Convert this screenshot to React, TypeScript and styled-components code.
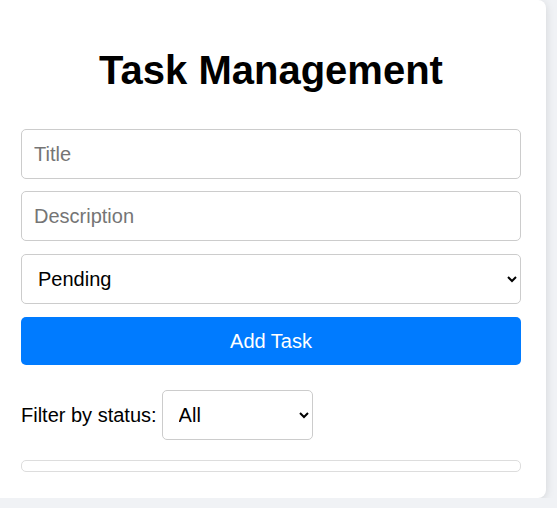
import React, { useState } from "react";
import styled, { createGlobalStyle } from "styled-components";

const GlobalStyle = createGlobalStyle`
  html, body {
    margin: 0;
    padding: 0;
    background: #f0f2f5;
    font-family: "Liberation Sans", Arial, sans-serif;
    overflow: hidden;
  }
  * { box-sizing: border-box; }
`;

const Card = styled.div`
  width: 546px;
  background: #ffffff;
  border-radius: 0 8px 8px 0;
  box-shadow: 0 2px 10px rgba(0, 0, 0, 0.12);
  padding: 20px 25px 26px 21px;
  display: flex;
  flex-direction: column;
`;

const Title = styled.h1`
  margin: 28px 0 36px;
  font-size: 40px;
  font-weight: bold;
  text-align: center;
  color: #000;
`;

const Form = styled.form`
  display: flex;
  flex-direction: column;
  gap: 12px;
`;

const TextInput = styled.input`
  width: 100%;
  height: 50px;
  padding: 0 12px;
  font-family: inherit;
  font-size: 20px;
  border: 1px solid #ccc;
  border-radius: 5px;
  color: #000;
  &::placeholder { color: #757575; }
  &:focus { outline: none; }
`;

const Select = styled.select<{ $width?: string; $offset?: string }>`
  width: ${(p) => p.$width ?? "100%"};
  height: 50px;
  margin-top: ${(p) => p.$offset ?? "0"};
  padding: 0 12px;
  font-family: inherit;
  font-size: 20px;
  border: 1px solid #ccc;
  border-radius: 5px;
  background: #fff;
  color: #000;
`;

const AddButton = styled.button`
  width: 100%;
  height: 48px;
  margin-top: 1px;
  border: none;
  border-radius: 5px;
  background: #007bff;
  color: #fff;
  font-family: inherit;
  font-size: 20px;
  cursor: pointer;
`;

const FilterRow = styled.div`
  display: flex;
  align-items: center;
  gap: 5px;
  margin: 25px 0 20px;
  font-size: 20px;
  color: #000;
`;

const TaskList = styled.ul`
  list-style: none;
  margin: 0;
  padding: 5px;
  border: 1px solid #ddd;
  border-radius: 5px;
  min-height: 12px;
`;

export default function App() {
  const [status, setStatus] = useState("Pending");
  const [filter, setFilter] = useState("All");
  return (
    <>
      <GlobalStyle />
      <Card>
        <Title>Task Management</Title>
        <Form onSubmit={(e) => e.preventDefault()}>
          <TextInput placeholder="Title" />
          <TextInput placeholder="Description" />
          <Select $offset="1px" value={status} onChange={(e) => setStatus(e.target.value)}>
            <option>Pending</option>
            <option>In Progress</option>
            <option>Completed</option>
          </Select>
          <AddButton type="submit">Add Task</AddButton>
        </Form>
        <FilterRow>
          <label>Filter by status:</label>
          <Select $width="151px" value={filter} onChange={(e) => setFilter(e.target.value)}>
            <option>All</option>
            <option>Pending</option>
            <option>In Progress</option>
            <option>Completed</option>
          </Select>
        </FilterRow>
        <TaskList />
      </Card>
    </>
  );
}
